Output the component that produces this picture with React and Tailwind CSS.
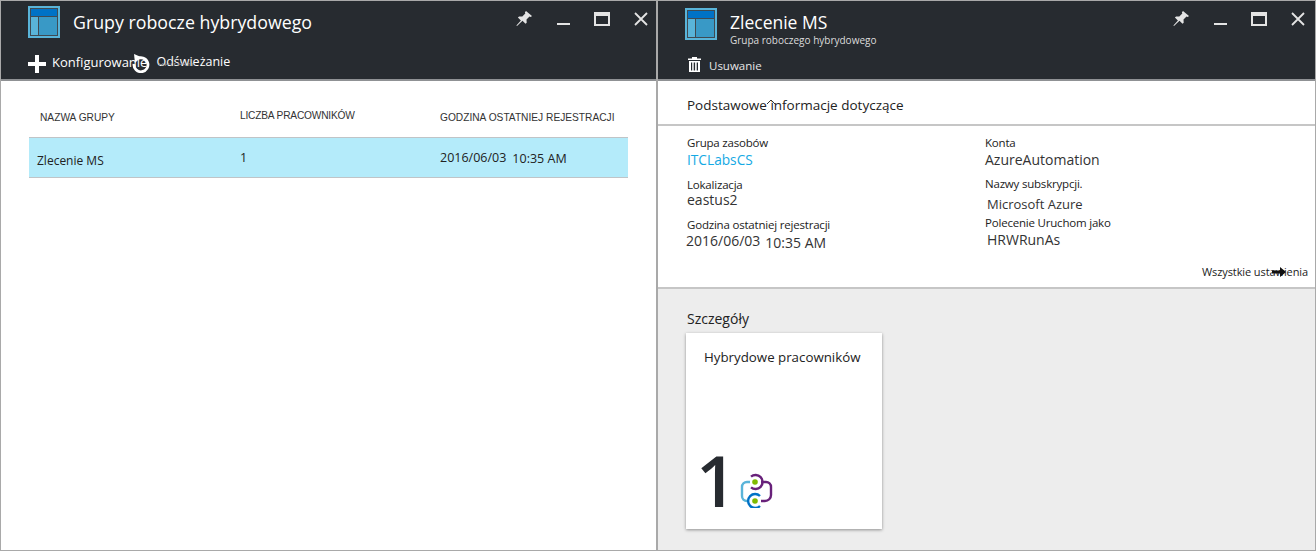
const F = { fontFamily: '"Open Sans","Liberation Sans",sans-serif' };
const A = { fontFamily: '"Liberation Sans",Arial,sans-serif' };

function BladeIcon() {
  return (
    <svg width="32" height="32" viewBox="0 0 32 32" className="shrink-0">
      <rect x="0" y="0" width="32" height="32" fill="#59b4d9" />
      <rect x="2" y="2" width="28" height="28" fill="#3f4a52" />
      <rect x="3" y="3" width="26" height="7" fill="#0072c6" />
      <rect x="3" y="11" width="7" height="18" fill="#59b4d9" />
      <rect x="11" y="11" width="18" height="18" fill="#3999c6" />
    </svg>
  );
}

function WindowControls() {
  return (
    <div className="flex items-start text-[#e4e4e4]">
      <svg width="18" height="18" viewBox="0 0 18 18" className="mt-[9px]" fill="currentColor">
        <path d="M11 1l6 5-1.2 1-1.3-.5-3 3 .2 3.2-1.2 1.1-3-3L2 16l-.6-.6 4.500-5-3-3 1.200-1 3.200.2 3-3-.4-1.300z" />
      </svg>
      <div className="ml-[24px] mt-[22px] h-[2px] w-[13px] bg-[#e4e4e4]" />
      <div className="ml-[24px] mt-[11px] h-[14px] w-[16px] border-2 border-t-[4px] border-[#e4e4e4]" />
      <svg width="14" height="14" viewBox="0 0 14 14" className="ml-[24px] mt-[11px]" stroke="currentColor" strokeWidth="1.8">
        <path d="M1 1l12 12M13 1L1 13" />
      </svg>
    </div>
  );
}

function Field({ label, value, className = "", valueClass = "text-[#333]" }) {
  return (
    <div className={className}>
      <div className="text-[11.5px] leading-[14px] tracking-[-0.2px] text-[#222]">{label}</div>
      <div className={`text-[14px] leading-[18px] ${valueClass}`}>{value}</div>
    </div>
  );
}

export default function App() {
  return (
    <div style={F} className="flex h-[551px] w-[1316px] overflow-hidden border border-[#a9a9a9] bg-white">
      {/* left blade */}
      <section className="flex w-[655px] shrink-0 flex-col">
        <header className="h-[80px] border-b-2 border-[#8f9194] bg-[#272b30] text-white">
          <div className="flex items-start justify-between pr-[8px]">
            <div className="flex items-center pl-[27px] pt-[2px]">
              <BladeIcon />
              <h1 className="ml-[13px] text-[17.800px] leading-[38px] font-normal">Grupy robocze hybrydowego</h1>
            </div>
            <WindowControls />
          </div>
          <div className="relative mt-[9px] flex items-center pl-[27px] text-[13px] leading-[18px]">
            <svg width="18" height="18" viewBox="0 0 18 18" fill="#fff" className="mt-[5px]">
              <path d="M7 0h4v7h7v4h-7v7H7v-7H0V7h7z" />
            </svg>
            <span className="ml-[6px]">Konfigurowanie</span>
            <svg width="20" height="20" viewBox="0 0 20 20" fill="none" stroke="#fff" strokeWidth="2.800" className="ml-[-16px] mt-[3px]">
              <path d="M6 6a7 7 0 1 1-3 5" />
              <path d="M3 1l7 3-6 6z" fill="#fff" stroke="none" />
            </svg>
            <span className="relative ml-[5px] mt-[1px] text-[12.5px]">Odświeżanie</span>
            <span className="absolute left-[157px] top-[13px] h-[3px] overflow-hidden text-[10px] leading-[3px] text-[#8d9094]">Refresh</span>
          </div>
        </header>
        <div className="flex-1 px-[28px] pt-[23px]">
          <div style={A} className="flex text-[10.2px] leading-[20px] text-[#333]">
            <div className="w-[211px] pl-[11px] pt-[4px]">NAZWA GRUPY</div>
            <div className="w-[200px] pt-[2px] tracking-[-0.2px]">LICZBA PRACOWNIKÓW</div>
            <div className="pt-[4px]">GODZINA OSTATNIEJ REJESTRACJI</div>
          </div>
          <div className="mt-[9px] flex h-[41px] items-center border-y border-[#c0c4c7] bg-[#b4ebfa] text-[12.500px] text-[#222]">
            <div className="w-[211px] pl-[8px] pt-[6px] text-[12px]">Zlecenie MS</div>
            <div className="w-[200px] pt-[1px]">1</div>
            <div className="flex pt-[2px]"><span>2016/06/03</span><span className="ml-[6px] pt-[1px]">10:35 AM</span></div>
          </div>
        </div>
      </section>

      <div className="w-[2px] shrink-0 bg-[#a9a9a9]" />

      {/* right blade */}
      <section className="flex min-w-0 flex-1 flex-col">
        <header className="h-[80px] border-b-2 border-[#8f9194] bg-[#272b30] text-white">
          <div className="flex items-start justify-between pr-[10px]">
            <div className="flex pl-[27px] pt-[7px]">
              <BladeIcon />
              <div className="ml-[13px] mt-[2px]">
                <div className="text-[17.500px] leading-[24px]">Zlecenie MS</div>
                <div className="text-[10px] leading-[12px] text-[#dcdcdc]">Grupa roboczego hybrydowego</div>
              </div>
            </div>
            <WindowControls />
          </div>
          <div className="mt-[9px] flex items-center pl-[30px] text-[11.5px] leading-[16px] text-[#e6e6e6]">
            <svg width="13" height="15" viewBox="0 0 13 15" fill="#fff">
              <path d="M4 0h5v1.500h4V3H0V1.500h4zM1 4h11v11H1zm2 1.500v8h1.200v-8zm2.700 0v8h1.400v-8zm3 0v8H10v-8z" fillRule="evenodd" />
            </svg>
            <span className="ml-[8px] pt-[3px]">Usuwanie</span>
          </div>
        </header>

        <div className="relative flex h-[45px] items-center border-b-2 border-[#c6c6c6] pl-[29px] pt-[6px] text-[13.500px] text-[#222]">
          Podstawowe informacje dotyczące
          <svg width="10" height="6" viewBox="0 0 10 6" fill="none" stroke="#333" strokeWidth="1" className="absolute left-[108px] top-[18px]">
            <path d="M1 5l4-4 4 4" />
          </svg>
        </div>

        <div className="relative flex h-[163px] border-b-2 border-[#c6c6c6] pl-[29px] pt-[10px]">
          <div className="w-[298px]">
            <Field label="Grupa zasobów" value={<span className="mt-[1px] block text-[13.700px]">ITCLabsCS</span>} valueClass="text-[#14a9e4]" />
            <Field className="mt-[9px]" label="Lokalizacja" value={<span className="-mt-[1px] block">eastus2</span>} />
            <Field className="mt-[9px]" label="Godzina ostatniej rejestracji" value={<span className="-ml-[1px] flex"><span>2016/06/03</span><span className="ml-[5px] pt-[2px]">10:35 AM</span></span>} />
          </div>
          <div>
            <Field label="Konta" value={<span className="mt-[1px] block">AzureAutomation</span>} />
            <Field className="mt-[8px]" label="Nazwy subskrypcji." value={<span className="mt-[4px] ml-[2px] block text-[13px]">Microsoft Azure</span>} />
            <Field className="mt-[3px]" label="Polecenie Uruchom jako" value={<span className="mt-[1px] ml-[2px] block">HRWRunAs</span>} />
          </div>
          <div className="absolute right-[7px] bottom-[8px] flex items-center text-[11px] leading-[14px] tracking-[-0.1px] text-[#222]">
            Wszystkie ustawienia
            <svg width="14" height="10" viewBox="0 0 14 10" className="absolute right-[22px] top-[2px]" fill="#111">
              <path d="M0 3.500h8V0l6 5-6 5V6.500H0z" />
            </svg>
          </div>
        </div>

        <div className="flex-1 bg-[#ededed] pl-[28px] pt-[20px]">
          <div className="ml-[1px] text-[14px] leading-[20px] text-[#222]">Szczegóły</div>
          <div className="mt-[4px] flex h-[196px] w-[196px] flex-col justify-between bg-white pl-[18px] shadow-[0_1px_3px_rgba(0,0,0,0.4)]">
            <div className="pt-[14px] text-[13.300px] leading-[20px] text-[#222]">Hybrydowe pracowników</div>
            <div className="flex items-end pb-[11px]">
              <span className="-ml-[8px] text-[71px] leading-[76px] font-semibold text-[#272b30]">1</span>
              <svg width="36" height="36" viewBox="0 0 36 36" fill="none" strokeWidth="2.400" className="mb-[10px] ml-[1px]">
                <path d="M12 10H9a5 5 0 0 0-5 5v9a5 5 0 0 0 5 5h1" stroke="#59b4d9" />
                <path d="M13 4.700A7 7 0 1 1 13 15.300" stroke="#68217a" />
                <path d="M23 10h5a5 5 0 0 1 5 5v8a6 6 0 0 1-6 6h-4" stroke="#68217a" />
                <path d="M22 24a7 7 0 1 0 0 10" stroke="#0072c6" />
                <circle cx="17" cy="10" r="2.800" fill="#7fba00" />
                <circle cx="17" cy="29" r="2.800" fill="#7fba00" />
              </svg>
            </div>
          </div>
        </div>
      </section>
    </div>
  );
}
